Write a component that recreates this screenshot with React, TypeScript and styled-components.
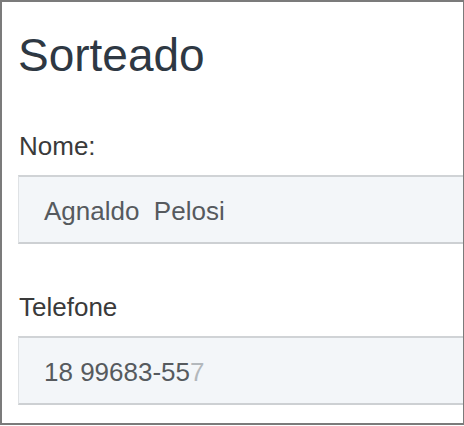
import React from "react";
import styled, { createGlobalStyle } from "styled-components";

const GlobalStyle = createGlobalStyle`
  html, body {
    margin: 0;
    padding: 0;
    background: #ffffff;
  }
  body {
    font-family: "Liberation Sans", Arial, sans-serif;
  }
`;

const Frame = styled.div`
  box-sizing: border-box;
  width: 464px;
  height: 425px;
  border-top: 2px solid #7b7b7b;
  border-left: 2px solid #7b7b7b;
  border-right: 1px solid #7b7b7b;
  border-bottom: 2px solid #7b7b7b;
  padding: 30px 0 0 16px;
  overflow: hidden;
`;

const Title = styled.h1`
  margin: 0 0 55px 0;
  font-size: 46px;
  line-height: 46px;
  font-weight: 400;
  color: #2e3843;
`;

const Group = styled.div`
  display: flex;
  flex-direction: column;
  gap: 16px;
  margin-bottom: 50px;
`;

const Label = styled.label`
  font-size: 26px;
  line-height: 26px;
  color: #3a3a3a;
  padding-left: 1px;
`;

const Field = styled.div`
  box-sizing: border-box;
  height: 69px;
  padding: 21px 0 0 25px;
  background: #f3f6f9;
  border-top: 2px solid #d0d3d6;
  border-bottom: 2px solid #cdd0d3;
  border-left: 1px solid #dfe2e5;
  font-size: 26px;
  line-height: 26px;
  color: #565a5e;
  white-space: pre;
`;

const Faded = styled.span`
  color: #b3b8bc;
`;

export default function App() {
  return (
    <>
      <GlobalStyle />
      <Frame>
        <Title>Sorteado</Title>
        <Group>
          <Label>Nome:</Label>
          <Field>Agnaldo  Pelosi</Field>
        </Group>
        <Group>
          <Label>Telefone</Label>
          <Field>
            18 99683-55<Faded>7</Faded>
          </Field>
        </Group>
      </Frame>
    </>
  );
}
